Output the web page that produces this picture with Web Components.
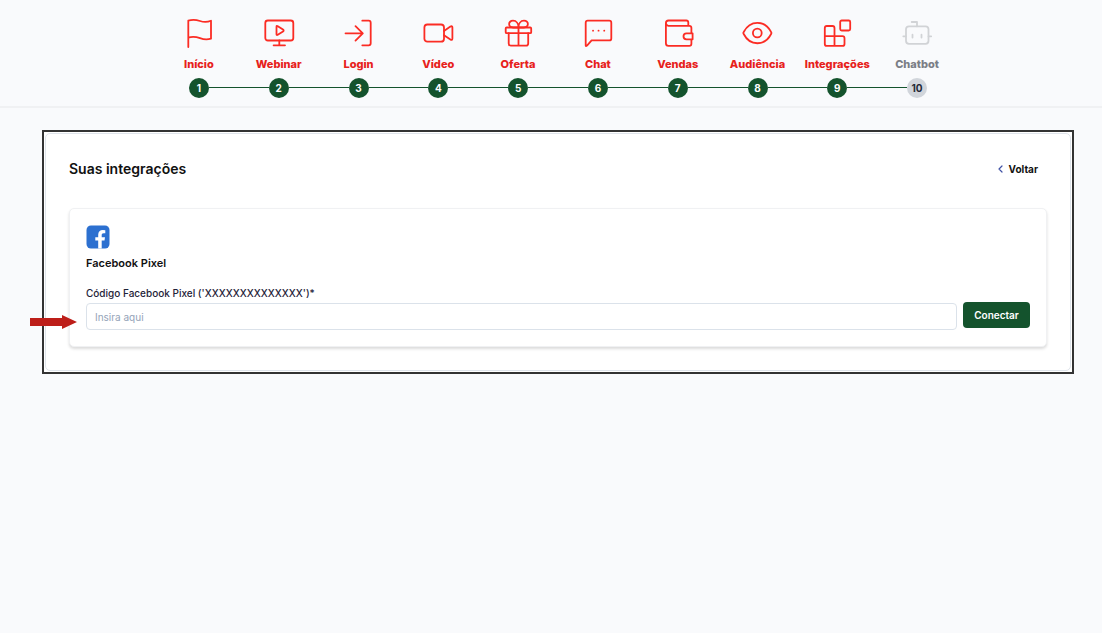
<!DOCTYPE html>
<html lang="pt-BR">
<head>
<meta charset="utf-8">
<meta name="viewport" content="width=device-width, initial-scale=1">
<title>Integrações</title>
<style>
body { margin: 0; background: #fff; font-family: Inter, "Liberation Sans", sans-serif; color: #111; }
</style>
</head>
<body>
<app-shell>
  <step-nav slot="header">
    <step-item icon="flag" number="1">Início</step-item>
    <step-item icon="webinar" number="2">Webinar</step-item>
    <step-item icon="login" number="3">Login</step-item>
    <step-item icon="video" number="4">Vídeo</step-item>
    <step-item icon="gift" number="5">Oferta</step-item>
    <step-item icon="chat" number="6">Chat</step-item>
    <step-item icon="wallet" number="7">Vendas</step-item>
    <step-item icon="eye" number="8">Audiência</step-item>
    <step-item icon="blocks" number="9">Integrações</step-item>
    <step-item icon="bot" number="10" pending>Chatbot</step-item>
  </step-nav>
  <integrations-card heading="Suas integrações">
    <pixel-form></pixel-form>
  </integrations-card>
</app-shell>
<script>
const ICONS = {
  flag: '<path d="M5.3 30V3.7C10 2 13 2.6 17 4S24 5.5 28 3.7V21.7C24 23 21 22.7 17 21.2S10 19 5.3 20.7"/>',
  webinar: '<rect x="2.3" y="3.5" width="28" height="20" rx="2.5"/><path d="M16.3 23.5V28.3M10.6 28.3H22M13.5 9.7V17.2Q13.5 18.6 14.8 17.8L20 14.5Q21.3 13.5 20 12.6L14.8 9.2Q13.5 8.4 13.5 9.7Z"/>',
  login: '<path d="M3.5 16.3H20.7M13.5 9.2L20.8 16.3L13.5 23.6M20.3 3.7H26.7Q28.7 3.7 28.7 5.7V26.3Q28.7 28.3 26.7 28.3H20.3"/>',
  video: '<rect x="2.4" y="7.5" width="19.6" height="17.2" rx="3"/><path d="M22 14L28.4 9.6Q30.4 8.5 30.4 10.5V21.6Q30.4 23.6 28.4 22.5L22 18.2"/>',
  gift: '<rect x="3.7" y="10.5" width="25.5" height="5.7" rx="1"/><path d="M6.7 16.2V26.5Q6.7 28.7 8.9 28.7H24Q26.2 28.7 26.2 26.5V16.2M16.5 10.5V28.7M16.5 10.5H11.2C5.7 10.5 5.9 3.7 11 3.7C14.5 3.7 16.5 7 16.5 10.5C16.5 7 18.5 3.7 22 3.7C27.1 3.7 27.3 10.5 21.8 10.5Z"/>',
  chat: '<path d="M3.7 28.4V5.7Q3.7 3.7 5.7 3.7H27.3Q29.3 3.7 29.3 5.7V21.4Q29.3 23.4 27.3 23.4H9.6L5 28.6Q3.7 29.5 3.7 28.4Z"/><path d="M11 13.7h.1M16.5 13.7h.1M22.2 13.7h.1"/>',
  wallet: '<path d="M26.3 8.8V5.5Q26.3 3.5 24.3 3.5H6.5Q3.9 3.5 3.9 6.1T6.5 8.8H27.3Q29.4 8.8 29.4 10.9V16.3M3.9 6V26.3Q3.9 28.9 6.5 28.9H27.3Q29.4 28.9 29.4 26.8V22.3M24.5 16.3H30.6V22.3H24.5A3 3 0 0 1 24.5 16.3Z"/>',
  eye: '<path d="M2.7 17Q2 16 2.7 15C9 2.7 23.8 2.7 30.1 15Q30.7 16 30.1 17C23.8 29.3 9 29.3 2.7 17Z"/><circle cx="16.3" cy="16" r="4.4"/>',
  blocks: '<path d="M13.5 28.9V11Q13.5 9 11.5 9H5.8Q3.8 9 3.8 11V26.9Q3.8 28.9 5.8 28.9H21.5Q23.5 28.9 23.5 26.9V21.2Q23.5 19.2 21.5 19.2H3.8"/><rect x="19.2" y="3.5" width="10" height="10" rx="1.5"/>',
  bot: '<path d="M16 9.3V5H10.7M2.3 19.3H5M27.5 19.3H30.2M11.5 17.7V20.5M20.5 17.7V20.5"/><rect x="5" y="9.3" width="22.5" height="17.5" rx="3"/>'
};

class BaseElement extends HTMLElement {
  connectedCallback() {
    if (this.shadowRoot) return;
    this.attachShadow({ mode: 'open' }).innerHTML =
      `<style>*{box-sizing:border-box}${this.styles()}</style>${this.markup()}`;
  }
}

customElements.define('app-shell', class extends BaseElement {
  styles() { return `
    :host { display: flex; flex-direction: column; min-height: calc(100vh - 1px); margin-right: 5px; background: #f9fafc; }
    header { padding: 17px 0 8px 14px; border-bottom: 2px solid #f0f1f3; }
    main { padding: 22px 28px 22px 42px; }`; }
  markup() { return `<header><slot name="header"></slot></header><main><slot></slot></main>`; }
});

customElements.define('step-nav', class extends BaseElement {
  styles() { return `
    :host { display: block; max-width: 798px; margin: 0 auto; }
    nav { display: grid; grid-template-columns: repeat(10, 1fr); }`; }
  markup() { return `<nav aria-label="Etapas"><slot></slot></nav>`; }
});

customElements.define('step-item', class extends BaseElement {
  styles() { return `
    :host { display: block; min-width: 0; --tone: #fb2c24; --text: #e7211b; --dot: #14532d; --num: #fff; }
    :host([pending]) { --tone: #d1d3d6; --text: #7b7e86; --dot: #d1d5db; --num: #1f2937; }
    a { display: flex; flex-direction: column; align-items: center; color: var(--text); text-decoration: none; font-size: 11px; font-weight: 800; line-height: 16px; white-space: nowrap; }
    svg { width: 32px; height: 32px; margin-bottom: 7px; fill: none; stroke: var(--tone); stroke-width: 1.8; stroke-linecap: round; stroke-linejoin: round; }
    .track { display: flex; align-items: center; align-self: stretch; margin-top: 6px; }
    .track::before, .track::after { content: ""; flex: 1; height: 1px; margin-bottom: 2px; background: #14532d; }
    :host(:first-of-type) .track::before, :host(:last-of-type) .track::after { background: none; }
    b { width: 20px; height: 20px; border-radius: 50%; background: var(--dot); color: var(--num); font-size: 10px; font-weight: 700; line-height: 20px; text-align: center; }`; }
  markup() { return `<a href="#${this.getAttribute('icon')}">
    <svg viewBox="0 0 32 32" aria-hidden="true">${ICONS[this.getAttribute('icon')]}</svg>
    <span><slot></slot></span>
    <span class="track"><b>${this.getAttribute('number')}</b></span></a>`; }
});

customElements.define('integrations-card', class extends BaseElement {
  styles() { return `
    :host { display: block; border: 2px solid #333; background: #fff; padding: 1px; }
    section { border: 1px solid #dfe4eb; border-radius: 5px; padding: 24px 23px 23px; }
    .top { display: flex; justify-content: space-between; align-items: center; padding-right: 9px; margin-bottom: 28px; }
    h1 { margin: 0; font-size: 14px; font-weight: 600; line-height: 22px; }
    a { display: flex; align-items: center; gap: 6px; color: #111; text-decoration: none; font-size: 10px; font-weight: 700; line-height: 16px; }
    svg { width: 5px; height: 8px; fill: none; stroke: #3f51a5; stroke-width: 1.2; stroke-linecap: round; stroke-linejoin: round; }`; }
  markup() { return `<section><div class="top"><h1>${this.getAttribute('heading')}</h1>
    <a href="#voltar"><svg viewBox="0 0 5 8" aria-hidden="true"><path d="M4 1L1 4L4 7"/></svg>Voltar</a></div><slot></slot></section>`; }
});

customElements.define('pixel-form', class extends BaseElement {
  styles() { return `
    :host { display: block; position: relative; border: 1px solid #f0f1f3; border-radius: 5px; padding: 16px; background: #fff; box-shadow: 0 2px 3px rgba(0,0,0,.14); }
    .logo { display: block; width: 24px; height: 24px; }
    h2 { margin: 6px 0 14px; font-size: 11px; font-weight: 600; line-height: 16px; }
    form { display: flex; align-items: flex-end; gap: 6px; margin: 0; }
    .field { flex: 1; min-width: 0; }
    label { display: block; margin-bottom: 2px; color: #1e2238; font-size: 10px; font-weight: 500; line-height: 16px; }
    input { display: block; width: 100%; height: 27px; padding: 0 8px; border: 1px solid #dbe2ea; border-radius: 4px; background: #fff; color: #1e2238; font: 10px Inter, "Liberation Sans", sans-serif; outline: none; }
    input::placeholder { color: #94a3b8; opacity: 1; }
    button { height: 26px; width: 67px; margin-bottom: 2px; padding: 0; border: 0; border-radius: 4px; background: #14532d; color: #fff; font: 600 10px Inter, "Liberation Sans", sans-serif; }
    .pointer { position: absolute; left: -40px; bottom: 17px; width: 47px; height: 14px; }`; }
  markup() { return `
    <svg class="logo" viewBox="0 0 24 24" aria-hidden="true"><rect width="23" height="23" x=".5" y=".5" rx="4.5" fill="#2c70d0"/><path fill="#fff" d="M12.2 23.5V15.6H9.3V12.3H12.2V9.8C12.2 6.8 14 5 16.8 5Q18.1 5 19.3 5.3V8.2H17.7C16.1 8.2 15.7 9 15.7 10.1V12.3H19L18.5 15.6H15.7V23.5Z"/></svg>
    <h2>Facebook Pixel</h2>
    <form><div class="field"><label for="code">Código Facebook Pixel ('XXXXXXXXXXXXXX')*</label>
    <input id="code" type="text" placeholder="Insira aqui"></div><button type="button">Conectar</button></form>
    <svg class="pointer" viewBox="0 0 47 14" aria-hidden="true"><path fill="#bd1e19" d="M0 3H32V0L47 7L32 14V11H0Z"/></svg>`; }
});
</script>
</body>
</html>
